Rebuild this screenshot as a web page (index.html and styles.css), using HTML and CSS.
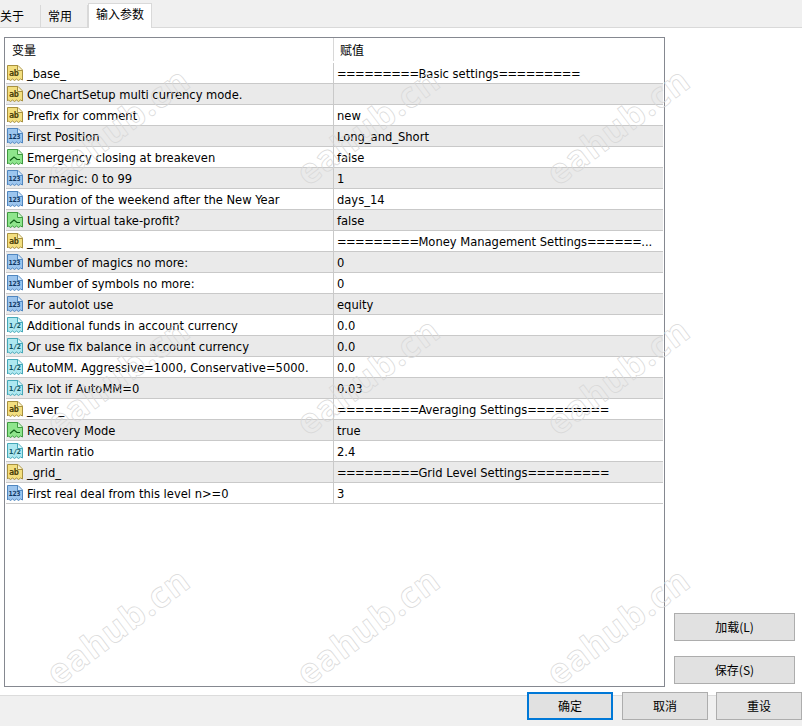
FILE: index.html
```html
<!DOCTYPE html>
<html lang="zh">
<head>
<meta charset="utf-8">
<title>输入参数</title>
<link rel="stylesheet" href="styles.css">
</head>
<body>
<svg class="defs" width="0" height="0" aria-hidden="true">
  <defs>
    <symbol id="doc" viewBox="0 0 16 16"><path class="sheet" d="M.5.5H11L15.500 5V15L13.500 14 11.500 15.500 9.500 14 7.500 15.500 5.500 14 3.500 15.500 1.500 14 .5 15Z"/><path class="fold" d="M10.500.5V5.500H15.500"/></symbol>
  </defs>
</svg>
<nav class="tabs">
  <span class="tab first">关于</span>
  <span class="tab">常用</span>
  <span class="tab active">输入参数</span>
</nav>
<main class="content">
  <section class="table">
    <div class="head"><span class="c1">变量</span><span class="c2">赋值</span></div>
    <div class="row"><span class="c1"><svg class="ic s"><use href="#doc"/><text x="2" y="11">ab</text></svg>_base_</span><span class="c2"><span class="eq">=========</span>Basic settings<span class="eq">=========</span></span></div>
    <div class="row alt"><span class="c1"><svg class="ic s"><use href="#doc"/><text x="2" y="11">ab</text></svg>OneChartSetup multi currency mode.</span><span class="c2"></span></div>
    <div class="row"><span class="c1"><svg class="ic s"><use href="#doc"/><text x="2" y="11">ab</text></svg>Prefix for comment</span><span class="c2">new</span></div>
    <div class="row alt"><span class="c1"><svg class="ic n"><use href="#doc"/><text class="sm" x="1.500" y="11">123</text></svg>First Position</span><span class="c2">Long_and_Short</span></div>
    <div class="row"><span class="c1"><svg class="ic b"><use href="#doc"/><path class="ln" d="M3 11.500 7 8 10 10.500H13"/></svg>Emergency closing at breakeven</span><span class="c2">false</span></div>
    <div class="row alt"><span class="c1"><svg class="ic n"><use href="#doc"/><text class="sm" x="1.500" y="11">123</text></svg>For magic: 0 to 99</span><span class="c2">1</span></div>
    <div class="row"><span class="c1"><svg class="ic n"><use href="#doc"/><text class="sm" x="1.500" y="11">123</text></svg>Duration of the weekend after the New Year</span><span class="c2">days_14</span></div>
    <div class="row alt"><span class="c1"><svg class="ic b"><use href="#doc"/><path class="ln" d="M3 11.500 7 8 10 10.500H13"/></svg>Using a virtual take-profit?</span><span class="c2">false</span></div>
    <div class="row"><span class="c1"><svg class="ic s"><use href="#doc"/><text x="2" y="11">ab</text></svg>_mm_</span><span class="c2"><span class="eq">=========</span>Money Management Settings<span class="eq">======</span>...</span></div>
    <div class="row alt"><span class="c1"><svg class="ic n"><use href="#doc"/><text class="sm" x="1.500" y="11">123</text></svg>Number of magics no more:</span><span class="c2">0</span></div>
    <div class="row"><span class="c1"><svg class="ic n"><use href="#doc"/><text class="sm" x="1.500" y="11">123</text></svg>Number of symbols no more:</span><span class="c2">0</span></div>
    <div class="row alt"><span class="c1"><svg class="ic n"><use href="#doc"/><text class="sm" x="1.500" y="11">123</text></svg>For autolot use</span><span class="c2">equity</span></div>
    <div class="row"><span class="c1"><svg class="ic f"><use href="#doc"/><text class="sm" x="2" y="11">1/2</text></svg>Additional funds in account currency</span><span class="c2">0.0</span></div>
    <div class="row alt"><span class="c1"><svg class="ic f"><use href="#doc"/><text class="sm" x="2" y="11">1/2</text></svg>Or use fix balance in account currency</span><span class="c2">0.0</span></div>
    <div class="row"><span class="c1"><svg class="ic f"><use href="#doc"/><text class="sm" x="2" y="11">1/2</text></svg>AutoMM. Aggressive=1000, Conservative=5000.</span><span class="c2">0.0</span></div>
    <div class="row alt"><span class="c1"><svg class="ic f"><use href="#doc"/><text class="sm" x="2" y="11">1/2</text></svg>Fix lot if AutoMM=0</span><span class="c2">0.03</span></div>
    <div class="row"><span class="c1"><svg class="ic s"><use href="#doc"/><text x="2" y="11">ab</text></svg>_aver_</span><span class="c2"><span class="eq">=========</span>Averaging Settings<span class="eq">=========</span></span></div>
    <div class="row alt"><span class="c1"><svg class="ic b"><use href="#doc"/><path class="ln" d="M3 11.500 7 8 10 10.500H13"/></svg>Recovery Mode</span><span class="c2">true</span></div>
    <div class="row"><span class="c1"><svg class="ic f"><use href="#doc"/><text class="sm" x="2" y="11">1/2</text></svg>Martin ratio</span><span class="c2">2.4</span></div>
    <div class="row alt"><span class="c1"><svg class="ic s"><use href="#doc"/><text x="2" y="11">ab</text></svg>_grid_</span><span class="c2"><span class="eq">=========</span>Grid Level Settings<span class="eq">=========</span></span></div>
    <div class="row"><span class="c1"><svg class="ic n"><use href="#doc"/><text class="sm" x="1.500" y="11">123</text></svg>First real deal from this level n&gt;=0</span><span class="c2">3</span></div>
  </section>
  <aside class="side">
    <button class="btn">加载(L)</button>
    <button class="btn">保存(S)</button>
  </aside>
</main>
<footer class="foot">
  <button class="btn primary">确定</button>
  <button class="btn">取消</button>
  <button class="btn">重设</button>
</footer>
<div class="marks" aria-hidden="true">
  <span>eahub.cn</span><span>eahub.cn</span><span>eahub.cn</span>
  <span>eahub.cn</span><span>eahub.cn</span><span>eahub.cn</span>
  <span>eahub.cn</span><span>eahub.cn</span><span>eahub.cn</span>
</div>
</body>
</html>
```
FILE: styles.css
```css
* { box-sizing: border-box; }
html, body { margin: 0; padding: 0; }
body {
  position: relative;
  width: 802px;
  height: 726px;
  overflow: hidden;
  background: #fff;
  color: #000;
  font: 12.800px/16px "DejaVu Sans Condensed", "DejaVu Sans", "Noto Sans CJK SC", sans-serif;
}
.defs { position: absolute; }
.tabs {
  display: flex;
  align-items: flex-end;
  height: 28px;
  background: #f0f0f0;
  border-bottom: 1px solid #d9d9d9;
  font: 12px/16px "Noto Sans CJK SC", sans-serif;
}
.tab {
  height: 23px;
  padding: 3px 0 0 7px;
  width: 47px;
  border-right: 1px solid #d9d9d9;
  margin-bottom: -1px;
  border-bottom: 1px solid #d9d9d9;
}
.tab.first { width: 41px; padding-left: 0; }
.tab.active {
  width: 64px;
  height: 25px;
  padding: 2px 0 0 7px;
  background: #fff;
  border: 1px solid #d9d9d9;
  border-bottom: 0;
  white-space: nowrap;
}
.content {
  display: flex;
  align-items: flex-end;
  height: 667px;
  padding: 9px 7px 0 4px;
  gap: 9px;
}
.table {
  width: 661px;
  height: 650px;
  border: 1px solid #858890;
  padding-left: 1px;
  padding-right: 1px;
  flex: none;
  align-self: flex-start;
}
.head, .row { display: flex; }
.head { height: 25px; padding-bottom: 2px; font: 12px/16px "Noto Sans CJK SC", sans-serif; align-items: center; }
.head .c1 { padding-left: 6px; }
.row { height: 21px; border-bottom: 1px solid #c9c9c9; align-items: center; white-space: nowrap; }
.row.alt { background: #eaeaea; }
.c1 { display: flex; align-items: center; width: 327px; flex: none; height: 100%; padding-top: 1px; overflow: hidden; }
.c2 { padding-left: 3px; flex: 1; min-width: 0; height: 100%; overflow: hidden; border-left: 1px solid #c9c9c9; line-height: 22px; }
.head .c2 { border-left: 1px solid #d8d8d8; padding-left: 6px; line-height: 23px; }
.eq { letter-spacing: -.6px; }
.ic { width: 16px; height: 16px; flex: none; margin: -1px 4px 0 1px; overflow: visible; }
.ic text { font: bold 8.500px "DejaVu Sans Mono", monospace; letter-spacing: -.3px; }
.ic text.sm { font-size: 7px; letter-spacing: -.3px; }
.sheet { fill: var(--paper); stroke: var(--edge); stroke-width: 1; }
.fold { fill: #fff; fill-opacity: .6; stroke: var(--edge); stroke-width: 1; }
.s { --paper: #f3df80; --edge: #a8913f; }
.s text { fill: #4a3e08; }
.n { --paper: #9cc5ee; --edge: #4f86c0; }
.n text { fill: #0e3560; }
.b { --paper: #8ee58c; --edge: #3f9a40; }
.ln { fill: none; stroke: #0e5f16; stroke-width: 1.200; }
.f { --paper: #aee8f0; --edge: #45a8b8; }
.f text { fill: #0e5260; }
.side {
  display: flex;
  flex-direction: column;
  gap: 15px;
  padding-bottom: 11px;
}
.btn {
  height: 28px;
  width: 121px;
  padding: 0;
  border: 1px solid #adadad;
  background: #e1e1e1;
  color: #000;
  font: 12px/16px "Noto Sans CJK SC", sans-serif;
}
.foot {
  display: flex;
  justify-content: flex-end;
  gap: 8px;
  height: 31px;
  background: #f0f0f0;
  border-top: 1px solid #dcdcdc;
}
.foot .btn { width: 86px; margin-top: -4px; }
.foot .btn.primary { border: 2px solid #0078d7; margin-right: 1px; }
.marks {
  position: absolute;
  left: 0;
  top: 0;
  width: 802px;
  height: 726px;
  overflow: hidden;
  display: grid;
  grid-template-columns: repeat(3, 250px);
  grid-auto-rows: 250px;
  pointer-events: none;
}
.marks span {
  display: flex;
  align-items: center;
  justify-content: center;
  transform: translate(-8px, 0) rotate(-37deg);
  font: 700 35px/1 "Open Sans", sans-serif;
  letter-spacing: 1px;
  color: transparent;
  -webkit-text-stroke: .7px #d8d8d8;
}
```
